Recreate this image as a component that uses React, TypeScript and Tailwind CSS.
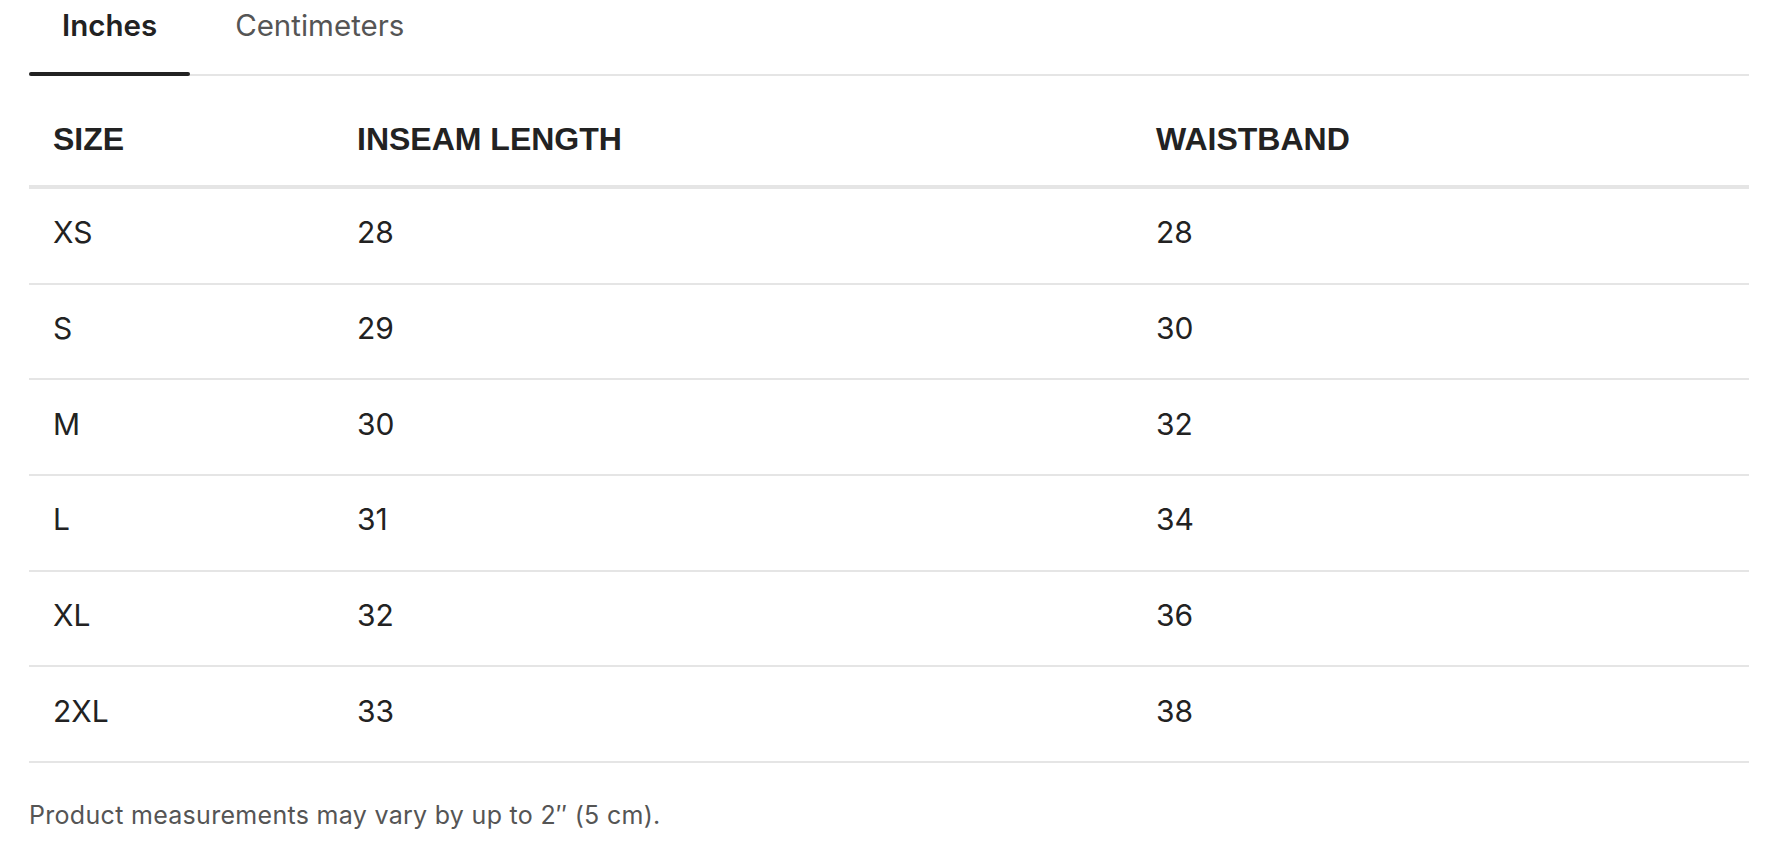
const rows = [
  { size: "XS", inseam: "28", waist: "28" },
  { size: "S", inseam: "29", waist: "30" },
  { size: "M", inseam: "30", waist: "32" },
  { size: "L", inseam: "31", waist: "34" },
  { size: "XL", inseam: "32", waist: "36" },
  { size: "2XL", inseam: "33", waist: "38" },
];

const body = "font-['Inter','Noto_Sans',sans-serif]";

const App = () => {
  return (
    <div className={`min-h-screen bg-white pl-[29px] text-[#222] ${body}`}>
      <div className="w-[1720px]">
        <div className="flex border-b-2 border-[#e5e5e5]">
          <button className="relative px-[33px] pb-[24px] text-[29.5px] font-semibold leading-[50px] text-[#222]">
            Inches
            <span className="absolute -bottom-[2px] left-0 right-0 h-[4px] rounded-full bg-[#222]" />
          </button>
          <button className="ml-[12px] px-[33px] pb-[24px] text-[29.5px] leading-[50px] text-[#555]">
            Centimeters
          </button>
        </div>

        <div className="grid grid-cols-[304px_799px_617px] border-b-4 border-[#e5e5e5] pt-[43px] pb-[26px] font-['Liberation_Sans',Arial,sans-serif] text-[32px] font-bold leading-[40px]">
          <div className="pl-[24px]">SIZE</div>
          <div className="pl-[24px]">INSEAM LENGTH</div>
          <div className="pl-[24px]">WAISTBAND</div>
        </div>

        {rows.map((r) => (
          <div
            key={r.size}
            className="grid h-[95.7px] grid-cols-[304px_799px_617px] items-center border-b-2 border-[#e5e5e5] pb-[6px] text-[30px]"
          >
            <div className="pl-[24px]">{r.size}</div>
            <div className="pl-[24px]">{r.inseam}</div>
            <div className="pl-[24px]">{r.waist}</div>
          </div>
        ))}

        <p className="pt-[34px] text-[25px] tracking-[0.3px] text-[#555]">
          Product measurements may vary by up to 2″ (5 cm).
        </p>
      </div>
    </div>
  );
};

export default App;
